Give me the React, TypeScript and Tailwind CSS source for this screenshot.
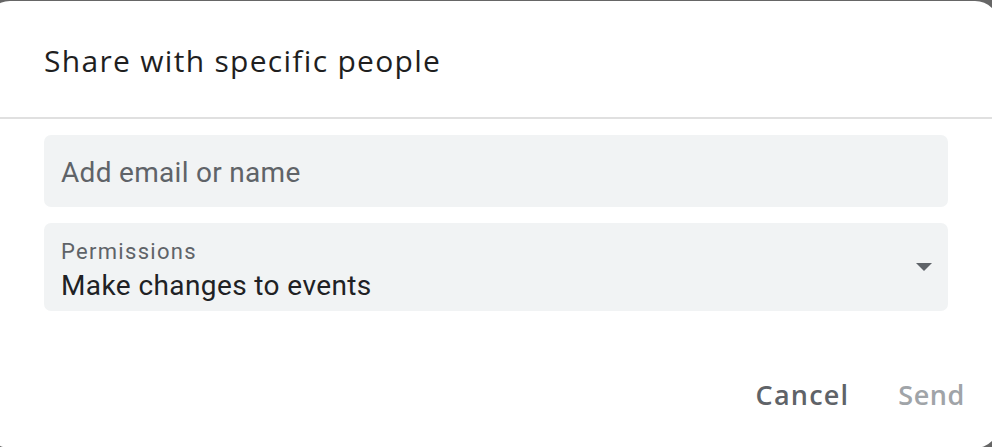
import React from "react";

export default function App() {
  return (
    <div className="h-[447px] w-[992px] overflow-hidden bg-[#666666]">
      <div className="ml-[-14px] mt-[1px] flex h-[447px] w-[1013px] flex-col rounded-[24px] bg-white pl-[58px] pr-[58px]">
        <div className="flex h-[116px] items-center pt-[3px]">
          <h1 className="text-[30px] tracking-[1.3px] text-[#1f1f1f]" style={{ fontFamily: '"Open Sans", sans-serif' }}>
            Share with specific people
          </h1>
        </div>
        <div className="-ml-[58px] -mr-[58px] h-[2px] bg-[#e0e0e0]" />
        <div className="mt-[16px] flex h-[72px] w-[904px] items-center rounded-[7px] bg-[#f1f3f4] px-[17px] pt-[3px]">
          <span className="text-[28px] tracking-[0.3px] text-[#5f6368]" style={{ fontFamily: 'Roboto, sans-serif' }}>
            Add email or name
          </span>
        </div>
        <div className="mt-[16px] flex h-[88px] w-[904px] items-center rounded-[7px] bg-[#f1f3f4] pl-[17px] pr-[16px]">
          <div className="flex flex-1 flex-col pt-[8px]" style={{ fontFamily: 'Roboto, sans-serif' }}>
            <span className="text-[22px] leading-[24px] tracking-[1.3px] text-[#5f6368]">Permissions</span>
            <span className="mt-[6px] text-[28px] leading-[32px] tracking-[0.4px] text-[#202124]">Make changes to events</span>
          </div>
          <svg width="16" height="8" viewBox="0 0 16 8">
            <path d="M0 0 L16 0 L8 8 Z" fill="#5f6368" />
          </svg>
        </div>
        <div className="mt-[64px] flex justify-end gap-[49px]" style={{ fontFamily: '"Open Sans", sans-serif' }}>
          <span className="text-[27px] font-semibold tracking-[1.2px] text-[#5f6368]">Cancel</span>
          <span className="mr-[-24px] text-[27px] font-semibold tracking-[0.6px] text-[#a0a4a8]">Send</span>
        </div>
      </div>
    </div>
  );
}
